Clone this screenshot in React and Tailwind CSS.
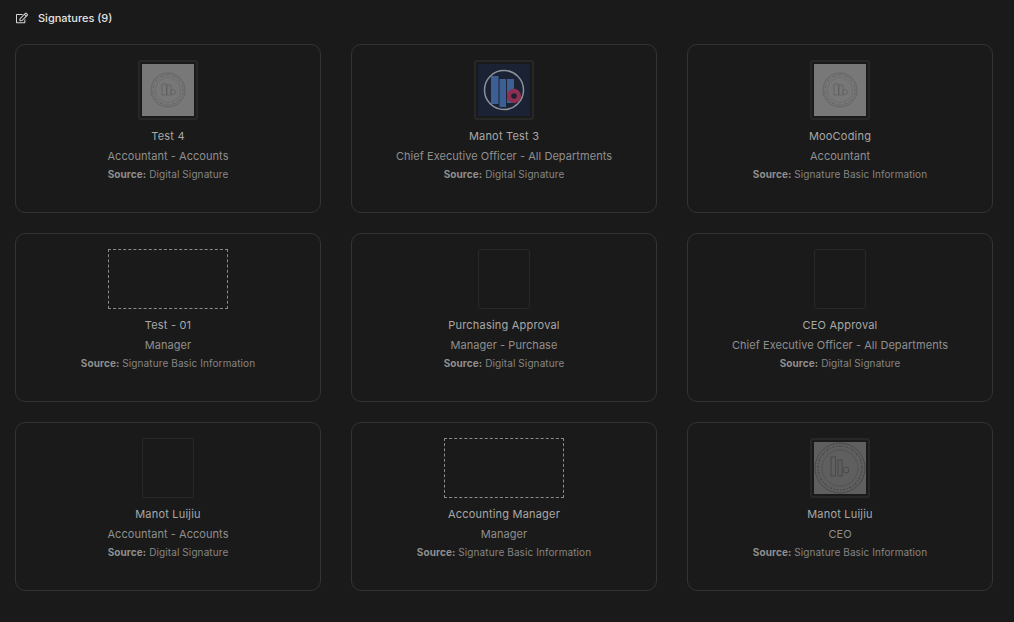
import React from 'react';
import { FaRegEdit } from 'react-icons/fa';

const signatures = [
  { name: 'Test 4', role: 'Accountant - Accounts', source: 'Digital Signature', kind: 'seal' },
  { name: 'Manot Test 3', role: 'Chief Executive Officer - All Departments', source: 'Digital Signature', kind: 'logo' },
  { name: 'MooCoding', role: 'Accountant', source: 'Signature Basic Information', kind: 'seal' },
  { name: 'Test - 01', role: 'Manager', source: 'Signature Basic Information', kind: 'dashed' },
  { name: 'Purchasing Approval', role: 'Manager - Purchase', source: 'Digital Signature', kind: 'empty' },
  { name: 'CEO Approval', role: 'Chief Executive Officer - All Departments', source: 'Digital Signature', kind: 'empty' },
  { name: 'Manot Luijiu', role: 'Accountant - Accounts', source: 'Digital Signature', kind: 'empty' },
  { name: 'Accounting Manager', role: 'Manager', source: 'Signature Basic Information', kind: 'dashed' },
  { name: 'Manot Luijiu', role: 'CEO', source: 'Signature Basic Information', kind: 'largeSeal' },
];

function Seal({ large }) {
  const stroke = large ? '#404040' : '#5c5c5c';
  const ring = large ? '#4a4a4a' : '#666666';
  return (
    <svg viewBox="0 0 52 52" className="w-[52px] h-[52px] block">
      <rect width="52" height="52" fill={large ? '#5f5f5f' : '#787878'} />
      <circle cx="26" cy="26" r={large ? 25 : 17} fill="none" stroke={stroke} strokeWidth="0.7" />
      <circle cx="26" cy="26" r={large ? 22 : 15} fill="none" stroke={ring} strokeWidth="1.4" strokeDasharray="1.2 1.6 2.4 1.4" />
      <circle cx="26" cy="26" r={large ? 18 : 12.5} fill="none" stroke={stroke} strokeWidth="0.4" />
      <g fill="none" stroke={stroke} strokeWidth="0.7">
        <rect x={large ? 17 : 20} y={large ? 15 : 20} width="4.5" height={large ? 19 : 11} />
        <rect x={large ? 24 : 25} y={large ? 18 : 21} width="4" height={large ? 16 : 10} />
        <circle cx={large ? 32 : 31} cy={large ? 28 : 28} r={large ? 3 : 2.5} />
      </g>
    </svg>
  );
}

function Logo() {
  return (
    <svg viewBox="0 0 52 52" className="w-[52px] h-[52px] block">
      <rect width="52" height="52" fill="#1a2233" />
      <circle cx="26" cy="26" r="19.5" fill="none" stroke="#8c929c" strokeWidth="1.5" />
      <rect x="13" y="12" width="7.5" height="28" fill="#3d5f93" />
      <rect x="21.5" y="15" width="6.5" height="28" fill="#3d5f93" />
      <rect x="29" y="15" width="7" height="24" fill="#3d5f93" />
      <circle cx="36" cy="32" r="7.2" fill="#8e2f50" />
      <circle cx="36" cy="32" r="2.8" fill="#1a2233" />
    </svg>
  );
}

function SignatureBox({ kind }) {
  if (kind === 'dashed') {
    return <div className="w-[120px] h-[60px] border border-dashed border-[#8a8a8a]" />;
  }
  if (kind === 'empty') {
    return <div className="w-[52px] h-[60px] border border-[#282828] rounded-[3px]" />;
  }
  return (
    <div className="h-[60px] px-[2px] flex items-center border-[2px] border-[#272727] rounded-[3px]">
      {kind === 'logo' ? <Logo /> : <Seal large={kind === 'largeSeal'} />}
    </div>
  );
}

function SignatureCard({ item }) {
  return (
    <div className="h-[169px] pt-[15px] flex flex-col items-center border border-[#333333] rounded-[10px] text-center">
      <SignatureBox kind={item.kind} />
      <div className="mt-[8px] text-[11px] leading-[16px] tracking-[0.2px] text-[#a8a8a8]">{item.name}</div>
      <div className="mt-[4px] text-[11px] leading-[16px] tracking-[0.05px] text-[#8f8f8f]">{item.role}</div>
      <div className="mt-[2px] text-[10px] leading-[16px] tracking-[0.1px] text-[#858585]">
        <span className="font-bold text-[#8f8f8f]">Source:</span> {item.source}
      </div>
    </div>
  );
}

export default function App() {
  return (
    <div className="w-[1014px] h-[622px] overflow-hidden bg-[#1a1a1a] pl-[15px] pr-[21px] pt-[11px] font-['Inter',sans-serif]">
      <div className="h-[14px] flex items-center text-[11px] font-medium text-[#e4e4e4]">
        <FaRegEdit className="w-[12px] h-[12px] ml-px mr-[10px] text-[#d8d8d8]" />
        Signatures (9)
      </div>
      <div className="mt-[19px] grid grid-cols-3 gap-x-[30px] gap-y-[20px]">
        {signatures.map((item, i) => (
          <SignatureCard key={i} item={item} />
        ))}
      </div>
    </div>
  );
}
